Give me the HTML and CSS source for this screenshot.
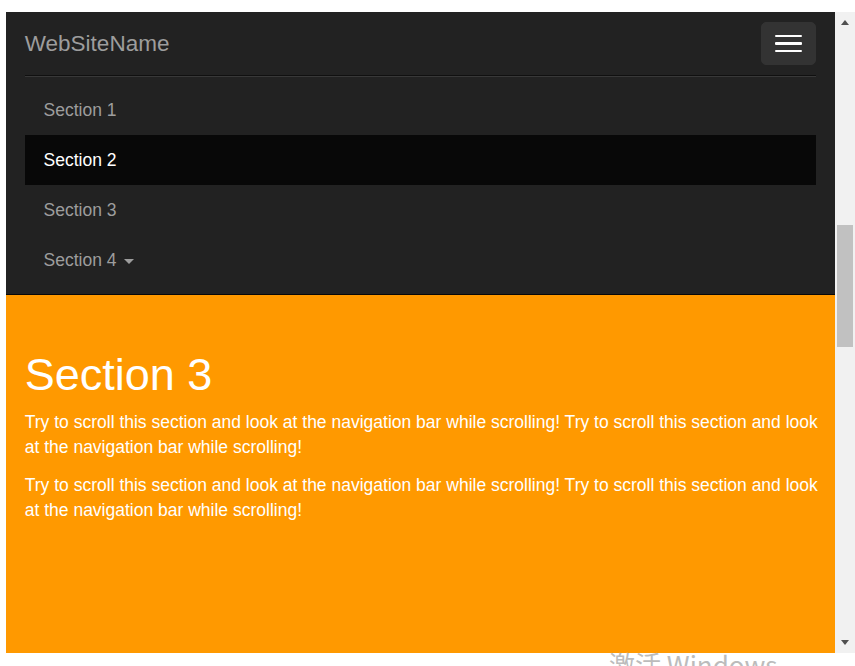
FILE: index.html
```html
<!DOCTYPE html>
<html lang="en">
<head>
<meta charset="utf-8">
<title>Scrollspy</title>
<link rel="stylesheet" href="styles.css">
</head>
<body>
<div class="screen">
  <div class="viewport">
    <nav class="navbar">
      <div class="navbar-header">
        <a class="brand" href="#">WebSiteName</a>
        <button class="toggle" type="button" aria-label="Toggle navigation">
          <span class="icon-bar"></span>
          <span class="icon-bar"></span>
          <span class="icon-bar"></span>
        </button>
      </div>
      <div class="collapse">
        <ul class="nav">
          <li><a href="#section1">Section 1</a></li>
          <li class="active"><a href="#section2">Section 2</a></li>
          <li><a href="#section3">Section 3</a></li>
          <li><a href="#section4">Section 4 <span class="caret"></span></a></li>
        </ul>
      </div>
    </nav>
    <section class="section3">
      <h1>Section 3</h1>
      <p>Try to scroll this section and look at the navigation bar while scrolling! Try to scroll this section and look at the navigation bar while scrolling!</p>
      <p>Try to scroll this section and look at the navigation bar while scrolling! Try to scroll this section and look at the navigation bar while scrolling!</p>
    </section>
  </div>
  <div class="scrollbar">
    <span class="arrow up"></span>
    <div class="track"><div class="thumb"></div></div>
    <span class="arrow down"></span>
  </div>
</div>
<div class="watermark">激活 Windows</div>
</body>
</html>
```

FILE: styles.css
```css
html, body {
  margin: 0;
  padding: 0;
  background: #fff;
  height: 100%;
  overflow: hidden;
}
body {
  font-family: "Liberation Sans", Arial, sans-serif;
  font-size: 17.5px;
  line-height: 25px;
}
.screen {
  display: flex;
  padding: 12px 0 0 6px;
}
.viewport {
  width: 829px;
  height: 641px;
  overflow: hidden;
  display: flex;
  flex-direction: column;
  background: #ff9900;
}
.navbar {
  background: #222;
  border-bottom: 1px solid #080808;
  padding: 0 18.75px;
  flex: none;
}
.navbar-header {
  display: flex;
  justify-content: space-between;
  align-items: flex-start;
  height: 62.5px;
}
.brand {
  display: block;
  font-size: 22.5px;
  line-height: 25px;
  padding: 18.75px 0;
  color: #9d9d9d;
  text-decoration: none;
}
.toggle {
  margin-top: 10px;
  width: 55px;
  height: 42.5px;
  padding: 11.25px 12.5px;
  background: #333;
  border: 1px solid #333;
  border-radius: 5px;
  display: flex;
  flex-direction: column;
  justify-content: center;
  gap: 5px;
  box-sizing: border-box;
}
.icon-bar {
  display: block;
  width: 27.5px;
  height: 2.5px;
  background: #fff;
  border-radius: 1px;
}
.collapse {
  border-top: 1px solid #101010;
  box-shadow: inset 0 1px 0 rgba(255, 255, 255, 0.1);
}
.nav {
  list-style: none;
  margin: 9.375px 0;
  padding: 0;
}
.nav a {
  display: block;
  padding: 13.5px 18.75px 11.5px;
  line-height: 25px;
  color: #9d9d9d;
  text-decoration: none;
}
.nav .active a {
  background: #080808;
  color: #fff;
}
.caret {
  display: inline-block;
  width: 0;
  height: 0;
  margin-left: 2.5px;
  vertical-align: middle;
  border-top: 5px solid;
  border-left: 5px solid transparent;
  border-right: 5px solid transparent;
}
.section3 {
  flex: 1;
  background: #ff9900;
  color: #fff;
  padding: 54.5px 12px 0 18.75px;
}
.section3 h1 {
  margin: 0 0 11px;
  font-size: 45px;
  line-height: 49.5px;
  font-weight: 500;
}
.section3 p {
  margin: 0 0 12.5px;
}
.scrollbar {
  width: 20px;
  height: 641px;
  background: #f1f1f1;
  display: flex;
  flex-direction: column;
  align-items: center;
}
.arrow {
  width: 0;
  height: 0;
  border-left: 4.5px solid transparent;
  border-right: 4.5px solid transparent;
  flex: none;
}
.arrow.up {
  margin-top: 8px;
  border-bottom: 5px solid #505050;
}
.arrow.down {
  margin-bottom: 8px;
  border-top: 5px solid #505050;
}
.track {
  flex: 1;
  width: 100%;
  display: flex;
  justify-content: center;
}
.thumb {
  margin-top: 200px;
  width: 16px;
  height: 122px;
  background: #c1c1c1;
}
.watermark {
  position: absolute;
  left: 609px;
  top: 647px;
  font-family: "Noto Sans CJK SC", "Liberation Sans", sans-serif;
  font-size: 26px;
  line-height: 34px;
  color: #bcbcbc;
  white-space: nowrap;
}
```
